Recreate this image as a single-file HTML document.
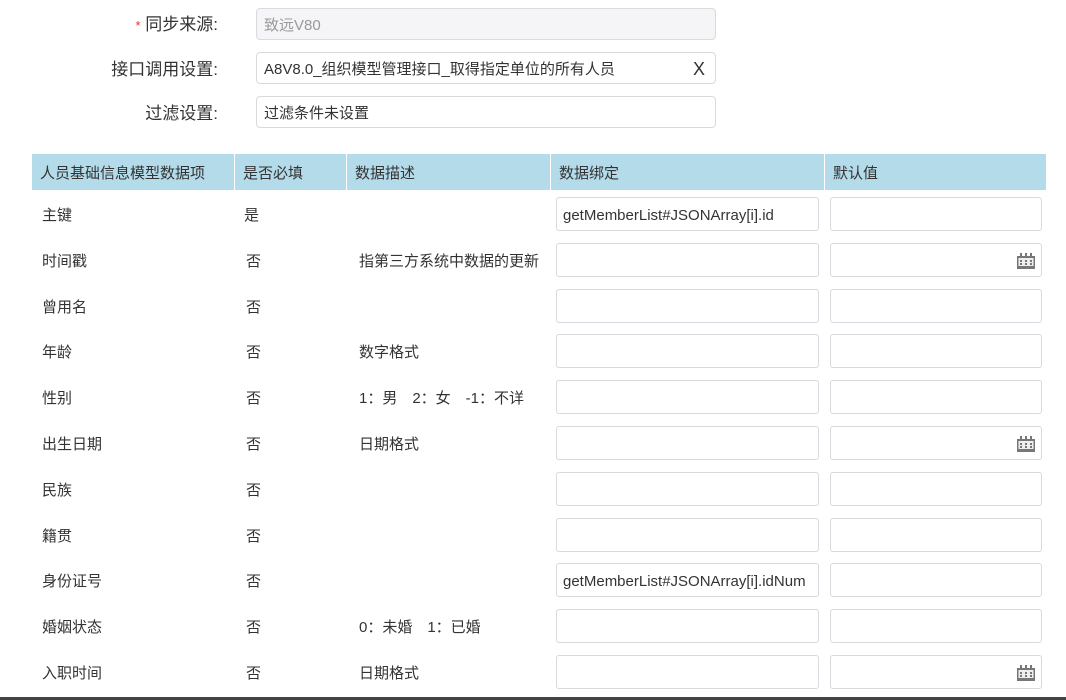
<!DOCTYPE html>
<html><head><meta charset="utf-8"><style>
body{margin:0;width:1066px;height:700px;position:relative;background:#fff;font-family:"Liberation Sans","Noto Sans CJK SC",sans-serif;color:#333;overflow:hidden}
.a{position:absolute;white-space:nowrap}
.lbl{font-size:17px;color:#333;text-align:right;width:218px;left:0}
.fi{position:absolute;left:256px;width:451px;height:30px;border:1px solid #d9d9de;border-radius:4px;font-size:15px;line-height:33px;padding-left:7px;box-sizing:content-box}
.hd{position:absolute;top:154px;height:36px;background:#b4dbe9;font-size:15px;line-height:39px;padding-left:8px;box-sizing:border-box;color:#333}
.c{position:absolute;font-size:15px;white-space:nowrap}
.in{position:absolute;height:32px;border:1px solid #d9d9de;border-radius:3px;font-size:15px;line-height:35px;padding-left:6px;box-sizing:content-box}
.cal{position:absolute;right:6px;top:9px}
</style></head><body>
<div class="a lbl" style="top:10px"><span style="color:#e33;font-size:13px">*</span> 同步来源:</div>
<div class="fi" style="top:8px;background:#f5f5f8;color:#999">致远V80</div>
<div class="a lbl" style="top:55px">接口调用设置:</div>
<div class="fi" style="top:52px">A8V8.0_组织模型管理接口_取得指定单位的所有人员<span style="position:absolute;right:10px;font-size:18px;line-height:32px">X</span></div>
<div class="a lbl" style="top:99px">过滤设置:</div>
<div class="fi" style="top:96px">过滤条件未设置</div>
<div class="hd" style="left:32px;width:202px">人员基础信息模型数据项</div>
<div class="hd" style="left:235px;width:111px">是否必填</div>
<div class="hd" style="left:347px;width:203px">数据描述</div>
<div class="hd" style="left:551px;width:273px">数据绑定</div>
<div class="hd" style="left:825px;width:221px">默认值</div>
<div id="rows"></div>
<div style="position:absolute;left:0;top:697px;width:1066px;height:3px;background:#444"></div>
<script>
var d=[["主键","是","","getMemberList#JSONArray[i].id",0],["时间戳","否","指第三方系统中数据的更新","",1],["曾用名","否","","",0],["年龄","否","数字格式","",0],["性别","否","1：男　2：女　-1：不详","",0],["出生日期","否","日期格式","",1],["民族","否","","",0],["籍贯","否","","",0],["身份证号","否","","getMemberList#JSONArray[i].idNum",0],["婚姻状态","否","0：未婚　1：已婚","",0],["入职时间","否","日期格式","",1]];
var cal='<svg class="cal" width="18" height="16" viewBox="0 0 18 16"><rect x="0" y="3" width="18" height="13" fill="#777"/><rect x="1.5" y="5" width="15" height="8" fill="#eee"/><rect x="3" y="0" width="2" height="5" fill="#777"/><rect x="8" y="0" width="2" height="5" fill="#777"/><rect x="13" y="0" width="2" height="5" fill="#777"/><g fill="#777"><rect x="3" y="7" width="2" height="2"/><rect x="8" y="7" width="2" height="2"/><rect x="13" y="7" width="2" height="2"/><rect x="3" y="10" width="2" height="2"/><rect x="8" y="10" width="2" height="2"/><rect x="13" y="10" width="2" height="2"/></g></svg>';
var h='';
d.forEach(function(r,i){var y=197+i*45.8;var t=y+7;
h+='<div class="c" style="left:42px;top:'+t+'px">'+r[0]+'</div>';
h+='<div class="c" style="left:'+(i==0?244:246)+'px;top:'+t+'px">'+r[1]+'</div>';
h+='<div class="c" style="left:359px;top:'+t+'px">'+r[2]+'</div>';
h+='<div class="in" style="left:556px;top:'+y+'px;width:255px">'+r[3]+'</div>';
h+='<div class="in" style="left:830px;top:'+y+'px;width:204px">'+(r[4]?cal:'')+'</div>';});
document.getElementById('rows').innerHTML=h;
</script>
</body></html>
